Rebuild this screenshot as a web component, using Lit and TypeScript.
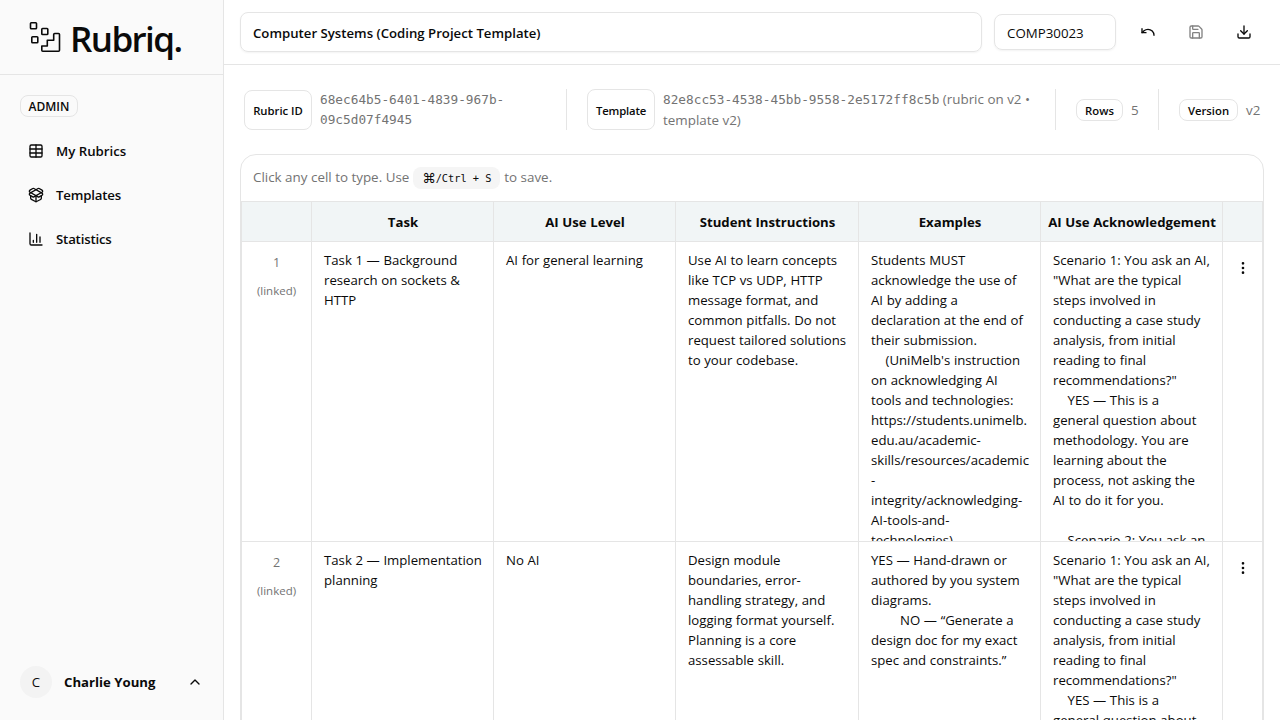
import { LitElement, html, css, svg } from "lit";
import { customElement } from "lit/decorators.js";

const ICONS: Record<string, unknown> = {
  table: svg`<rect x="3" y="3" width="18" height="18" rx="2"/><path d="M3 9h18M3 15h18M12 3v18"/>`,
  box: svg`<path d="M12 22v-9"/><path d="M15.17 2.21a1.67 1.67 0 0 1 1.63 0L21 4.57a1.93 1.93 0 0 1 0 3.36L8.82 14.79a1.655 1.655 0 0 1-1.64 0L3 12.43a1.93 1.93 0 0 1 0-3.36z"/><path d="M20 13v3.87a2.06 2.06 0 0 1-1.11 1.83l-6 3.08a1.93 1.93 0 0 1-1.78 0l-6-3.08A2.06 2.06 0 0 1 4 16.87V13"/><path d="M21 12.43a1.93 1.93 0 0 0 0-3.36L8.83 2.2a1.64 1.64 0 0 0-1.63 0L3 4.57a1.93 1.93 0 0 0 0 3.36l12.18 6.86a1.636 1.636 0 0 0 1.63 0z"/>`,
  chart: svg`<path d="M3 3v16a2 2 0 0 0 2 2h16"/><path d="M18 17V9M13 17V5M8 17v-3"/>`,
  up: svg`<path d="m18 15-6-6-6 6"/>`,
  undo: svg`<path d="M3 7v6h6"/><path d="M21 17a9 9 0 0 0-9-9 9 9 0 0 0-6 2.3L3 13"/>`,
  save: svg`<path d="M15.2 3a2 2 0 0 1 1.4.6l3.8 3.8a2 2 0 0 1 .6 1.4V19a2 2 0 0 1-2 2H5a2 2 0 0 1-2-2V5a2 2 0 0 1 2-2z"/><path d="M17 21v-7a1 1 0 0 0-1-1H8a1 1 0 0 0-1 1v7"/><path d="M7 3v4a1 1 0 0 0 1 1h7"/>`,
  download: svg`<path d="M12 15V3"/><path d="M21 15v4a2 2 0 0 1-2 2H5a2 2 0 0 1-2-2v-4"/><path d="m7 10 5 5 5-5"/>`,
  dots: svg`<circle cx="12" cy="12" r="1"/><circle cx="12" cy="5" r="1"/><circle cx="12" cy="19" r="1"/>`,
};

const icon = (name: string) =>
  html`<svg class="icon" viewBox="0 0 24 24" fill="none" stroke="currentColor" stroke-width="2" stroke-linecap="round" stroke-linejoin="round">${ICONS[name]}</svg>`;

const SCENARIO = `Scenario 1: You ask an AI,
"What are the typical
steps involved in
conducting a case study
analysis, from initial
reading to final
recommendations?"
    YES — This is a
general question about
methodology. You are
learning about the
process, not asking the
AI to do it for you.

    Scenario 2: You ask an`;

const HEADERS = ["", "Task", "AI Use Level", "Student Instructions", "Examples", "AI Use Acknowledgement", ""];

const ROWS = [
  [
    "Task 1 — Background\nresearch on sockets &\nHTTP",
    "AI for general learning",
    "Use AI to learn concepts\nlike TCP vs UDP, HTTP\nmessage format, and\ncommon pitfalls. Do not\nrequest tailored solutions\nto your codebase.",
    "Students MUST\nacknowledge the use of\nAI by adding a\ndeclaration at the end of\ntheir submission.\n    (UniMelb's instruction\non acknowledging AI\ntools and technologies:\nhttps://students.unimelb.\nedu.au/academic-\nskills/resources/academic\n-\nintegrity/acknowledging-\nAI-tools-and-\ntechnologies)",
    SCENARIO,
  ],
  [
    "Task 2 — Implementation\nplanning",
    "No AI",
    "Design module\nboundaries, error-\nhandling strategy, and\nlogging format yourself.\nPlanning is a core\nassessable skill.",
    "YES — Hand-drawn or\nauthored by you system\ndiagrams.\n        NO — “Generate a\ndesign doc for my exact\nspec and constraints.”",
    SCENARIO,
  ],
];

@customElement("app-root")
export class AppRoot extends LitElement {
  static styles = css`
    :host {
      display: flex;
      width: 1280px;
      height: 720px;
      overflow: hidden;
      background: #fff;
      color: #0a0a0a;
      font: 400 13.2px/20px "Open Sans", sans-serif;
    }
    * { box-sizing: border-box; }
    .icon { width: 16px; height: 16px; flex: none; display: block; }
    .sidebar { width: 224px; flex: none; background: #fafafa; border-right: 1px solid #e5e5e5; display: flex; flex-direction: column; }
    .brand { height: 75px; border-bottom: 1px solid #e5e5e5; padding-left: 28px; display: flex; align-items: center; gap: 8px; }
    .logo { width: 34px; height: 34px; flex: none; }
    .wordmark { margin-top: 3px; font-size: 35px; line-height: 40px; font-weight: 550; letter-spacing: -1.6px; }
    .badge { border: 1px solid #e5e5e5; border-radius: 8px; padding: 2px 0 0; font-size: 11.3px; line-height: 18px; font-weight: 600; white-space: nowrap; display: flex; align-items: center; justify-content: center; flex: none; background: #fff; }
    .admin { width: 58px; height: 22px; margin: 20px 0 0 20px; background: transparent; font-size: 12px; padding-top: 1px; }
    .template-badge { letter-spacing: -0.15px; }
    .nav { display: flex; flex-direction: column; gap: 12px; padding: 18px 20px 0; }
    .nav-item { height: 32px; display: flex; align-items: center; gap: 12px; padding-left: 8px; font-weight: 600; font-size: 13.25px; }
    .nav-tight { letter-spacing: -0.2px; }
    .user { margin-top: auto; height: 76px; padding: 0 20px; display: flex; align-items: center; gap: 12px; font-weight: 700; }
    .avatar { width: 32px; height: 32px; border-radius: 50%; background: #f3f3f3; display: flex; align-items: center; justify-content: center; font-weight: 400; }
    .user .icon { margin-left: auto; }
    .main { flex: 1; min-width: 0; display: flex; flex-direction: column; }
    .topbar { height: 65px; flex: none; border-bottom: 1px solid #e5e5e5; display: flex; align-items: center; gap: 12px; padding: 0 16px; }
    .field { border: 1px solid #e5e5e5; border-radius: 8px; padding: 2px 12px 0; display: flex; align-items: center; box-shadow: 0 1px 2px rgba(0, 0, 0, 0.05); white-space: nowrap; }
    .title { width: 742px; height: 40px; font-weight: 600; }
    .code { width: 122px; height: 36px; margin-right: 2px; font-size: 13.3px; }
    .tool { width: 36px; height: 36px; display: flex; align-items: center; justify-content: center; }
    .muted { opacity: 0.5; }
    .meta { height: 41px; flex: none; margin: 24px 20px 0; display: flex; align-items: center; color: #737373; }
    .meta .badge { color: #0a0a0a; margin-right: 8px; }
    .id-badge { width: 68px; height: 40px; }
    .template-badge { width: 68px; height: 41px; }
    .rows-badge { width: 47px; height: 22px; }
    .version-badge { width: 59px; height: 22px; }
    .meta-text { white-space: pre; font-size: 13.4px; flex: none; }
    .id-text { width: 246px; }
    .template-text { width: 392px; }
    .rows-text { width: 27px; }
    .rule { width: 1px; height: 41px; background: #e5e5e5; margin-right: 20px; flex: none; }
    .mono { font-family: "DejaVu Sans Mono", monospace; font-size: 12.75px; }
    .card { flex: none; height: 800px; width: 1024px; margin: 24px 0 0 16px; border: 1px solid #e5e5e5; border-radius: 16px 16px 0 0; }
    .hint { height: 46px; padding: 0 12px; display: flex; align-items: center; color: #737373; white-space: pre; font-size: 13.4px; }
    .hint-text { padding-bottom: 2px; }
    .kbd { height: 22px; width: 87px; margin: 0 4px; border-radius: 8px; background: #f5f5f5; color: #0a0a0a; font: 10.3px/22px "DejaVu Sans Mono", monospace; display: flex; align-items: center; justify-content: center; }
    .cmd { font: 13.5px/22px "DejaVu Sans", sans-serif; }
    .table { border: 1px solid #e5e5e5; border-width: 1px 0 0 1px; }
    .row { display: grid; grid-template-columns: 70px 182px 182px 183px 182px 182px 40px; height: 300px; }
    .head { height: 40px; background: #f1f5f6; }
    .cell { border: 1px solid #e5e5e5; border-width: 0 1px 1px 0; padding: 8px 0 0 12px; white-space: pre; overflow: hidden; word-spacing: 0.2px; }
    .head .cell { padding: 1px 0 0 1px; display: flex; align-items: center; justify-content: center; font-weight: 700; }
    .index { padding: 11px 0; text-align: center; color: #737373; font-size: 11.5px; display: flex; flex-direction: column; gap: 8px; }
    .number { font-size: 12.5px; }
    .menu { padding: 18px 12px; }
  `;

  render() {
    return html`
      <aside class="sidebar">
        <div class="brand">
          <svg class="logo" viewBox="0 0 34 34" fill="none" stroke="#0a0a0a" stroke-width="1.6" stroke-linejoin="round">
            <rect x="2.5" y="2.8" width="6" height="6" rx=".8"/><rect x="13.8" y="8.5" width="6" height="6" rx=".8"/><rect x="3.8" y="16.8" width="6" height="6" rx=".8"/>
            <path d="M26.7 13.500H30.500q1 0 1 1V30.200q0 1-1 1H14.800q-1 0-1-1V26H19.300V20.200H25.700V14.500q0-1 1-1z"/>
          </svg>
          <span class="wordmark">Rubriq.</span>
        </div>
        <div class="badge admin">ADMIN</div>
        <nav class="nav">
          <div class="nav-item">${icon("table")}<span>My Rubrics</span></div>
          <div class="nav-item nav-tight">${icon("box")}<span>Templates</span></div>
          <div class="nav-item nav-tight">${icon("chart")}<span>Statistics</span></div>
        </nav>
        <div class="user"><span class="avatar">C</span><span>Charlie Young</span>${icon("up")}</div>
      </aside>
      <main class="main">
        <header class="topbar">
          <div class="field title">Computer Systems (Coding Project Template)</div>
          <div class="field code">COMP30023</div>
          <div class="tool">${icon("undo")}</div>
          <div class="tool muted">${icon("save")}</div>
          <div class="tool">${icon("download")}</div>
        </header>
        <section class="meta">
          <span class="badge id-badge">Rubric ID</span>
          <span class="meta-text id-text mono">${"68ec64b5-6401-4839-967b-\n09c5d07f4945"}</span>
          <span class="rule"></span>
          <span class="badge template-badge">Template</span>
          <span class="meta-text template-text"><span class="mono">82e8cc53-4538-45bb-9558-2e5172ff8c5b</span>${" (rubric on v2 •\ntemplate v2)"}</span>
          <span class="rule"></span>
          <span class="badge rows-badge">Rows</span>
          <span class="meta-text rows-text">5</span>
          <span class="rule"></span>
          <span class="badge version-badge">Version</span>
          <span class="meta-text">v2</span>
        </section>
        <section class="card">
          <div class="hint"><span class="hint-text">Click any cell to type. Use</span><span class="kbd"><span class="cmd">⌘</span>/Ctrl + S</span><span class="hint-text">to save.</span></div>
          <div class="table">
            <div class="row head">${HEADERS.map((h) => html`<div class="cell">${h}</div>`)}</div>
            ${ROWS.map(
              (cells, i) => html`<div class="row">
                <div class="cell index"><span class="number">${i + 1}</span><span>(linked)</span></div>
                ${cells.map((text) => html`<div class="cell">${text}</div>`)}
                <div class="cell menu">${icon("dots")}</div>
              </div>`
            )}
          </div>
        </section>
      </main>
    `;
  }
}
